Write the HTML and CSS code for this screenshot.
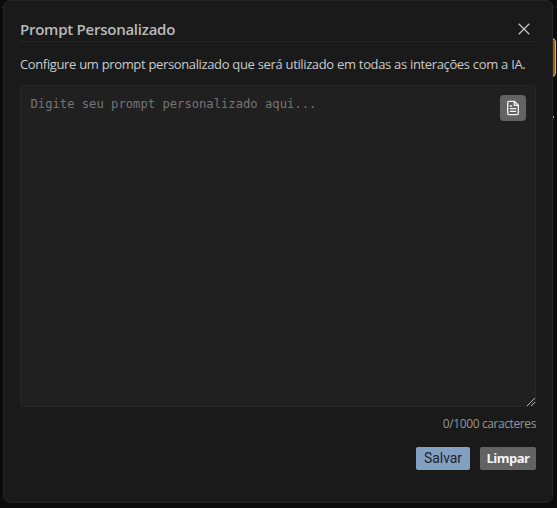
FILE: index.html
```html
<!DOCTYPE html>
<html lang="pt-BR">
<head>
<meta charset="utf-8">
<title>Prompt Personalizado</title>
<link rel="stylesheet" href="styles.css">
</head>
<body>
<div class="page-line"></div>
<div class="page-button"></div>
<div class="page-dot"></div>
<section class="modal">
  <header class="header">
    <h1 class="title"><span>Prompt Personalizado</span></h1>
    <svg class="close" viewBox="0 0 12 12" width="12" height="12"><path d="M.7.7l10.6 10.6M11.3.7L.7 11.3"/></svg>
  </header>
  <p class="description">Configure um prompt personalizado que será utilizado em todas as interações com a IA.</p>
  <div class="editor">
    <textarea class="input" placeholder="Digite seu prompt personalizado aqui..."></textarea>
    <button class="template" aria-label="Modelo">
      <svg viewBox="0 0 24 24" width="16" height="16"><path d="M14 2H6a2 2 0 0 0-2 2v16a2 2 0 0 0 2 2h12a2 2 0 0 0 2-2V8zM14 2v6h6M16 13H8M16 17H8M10 9H8"/></svg>
    </button>
    <svg class="grip" viewBox="0 0 8 8" width="8" height="8"><path d="M0 8L8 0M4 8L8 4"/></svg>
  </div>
  <div class="counter"><span>0/1000 caracteres</span></div>
  <footer class="actions">
    <button class="btn save">Salvar</button>
    <button class="btn clear">Limpar</button>
  </footer>
</section>
</body>
</html>
```
FILE: styles.css
```css
* { box-sizing: border-box; }
body {
  margin: 0;
  height: 508px;
  padding-left: 3px;
  overflow: hidden;
  position: relative;
  background: #0b0b0b;
  font-family: "Open Sans", "Noto Sans", sans-serif;
  color: #bababa;
}
.modal {
  position: relative;
  width: 550px;
  height: 503px;
  padding: 16px;
  background: #1a1a1a;
  border: 1px solid #262626;
  border-radius: 7px;
}
.page-line {
  position: absolute;
  inset: 0 0 auto 0;
  height: 8px;
  border-bottom: 1px solid #151515;
}
.page-button {
  position: absolute;
  left: 540px;
  top: 38px;
  width: 16px;
  height: 39px;
  background: #9b6200;
  border: 1px solid #b4b4b4;
  border-radius: 4px;
}
.page-dot {
  position: absolute;
  left: 553px;
  top: 116px;
  width: 1px;
  height: 2px;
  background: #aaa;
}
.header {
  display: flex;
  justify-content: space-between;
  height: 25px;
  border-bottom: 1px solid #262626;
}
.title {
  margin: 0;
  font-size: 15px;
  font-weight: 600;
  line-height: 25px;
  letter-spacing: -0.25px;
  white-space: nowrap;
}
.close {
  margin: 6px 6px 0 0;
  fill: none;
  stroke: #c4c4c4;
  stroke-width: 1.25;
}
.description {
  margin: 12px 0 0;
  height: 31px;
  font-size: 13px;
  line-height: 20px;
  letter-spacing: -0.37px;
  word-spacing: 0.25px;
  white-space: nowrap;
  color: #cacaca;
}
.editor {
  position: relative;
  height: 322px;
}
.input {
  display: block;
  width: 516px;
  height: 322px;
  padding: 10px 9.5px;
  background: #202020;
  border: 1px solid #272727;
  border-radius: 4px;
  resize: none;
  outline: 0;
  font: 12.18px/16px "DejaVu Sans Mono", monospace;
}
.input::placeholder { color: #757575; }
.template {
  position: absolute;
  top: 10px;
  right: 10px;
  width: 26px;
  height: 26px;
  display: grid;
  place-items: center;
  padding: 0;
  border: 0;
  border-radius: 4px;
  background: #636363;
}
.template svg {
  fill: none;
  stroke: #f4f4f4;
  stroke-width: 2;
  stroke-linecap: round;
  stroke-linejoin: round;
}
.grip {
  position: absolute;
  right: 1px;
  bottom: 1px;
  fill: none;
  stroke: #c8c8c8;
  stroke-width: 0.9;
}
.counter {
  margin-top: 8px;
  height: 18px;
  font-size: 12px;
  line-height: 18px;
  letter-spacing: -0.4px;
  text-align: right;
  color: #959595;
}
.actions {
  display: flex;
  justify-content: flex-end;
  gap: 10px;
  margin-top: 14px;
}
.btn {
  height: 23px;
  padding: 0;
  border: 0;
  border-radius: 2px;
  white-space: nowrap;
}
.save {
  width: 54px;
  background: #82a1c2;
  color: #20242b;
  font: 14px/23px Roboto, sans-serif;
  letter-spacing: -0.1px;
}
.clear {
  width: 56px;
  background: #636363;
  color: #f5f5f5;
  font: 700 13px/23px "Open Sans", sans-serif;
  letter-spacing: -0.5px;
}
```
